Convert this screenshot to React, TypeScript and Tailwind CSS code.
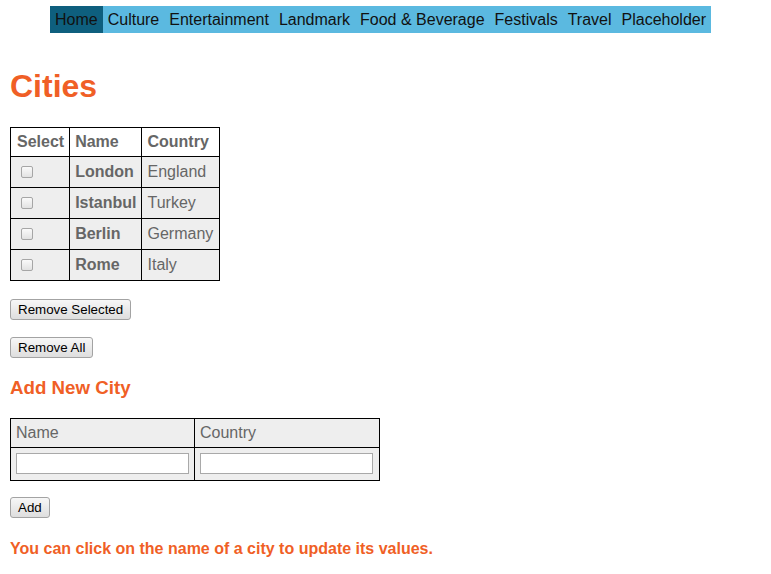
import React from "react";

const navItems = ["Home", "Culture", "Entertainment", "Landmark", "Food & Beverage", "Festivals", "Travel", "Placeholder"];
const cities = [
  { name: "London", country: "England" },
  { name: "Istanbul", country: "Turkey" },
  { name: "Berlin", country: "Germany" },
  { name: "Rome", country: "Italy" },
];

function Btn({ children }: { children: React.ReactNode }) {
  return (
    <button className="h-[21px] px-[7px] border border-[#a3a3a3] rounded-[3px] bg-gradient-to-b from-[#f7f7f7] to-[#dedede] text-[13.33px] leading-none text-black">
      {children}
    </button>
  );
}

export default function App() {
  return (
    <div className="min-h-[574px] bg-white px-[10px] pt-[6px] text-[16px]" style={{ fontFamily: '"Liberation Sans", Arial, sans-serif' }}>
      <nav className="ml-[40px] flex w-fit bg-[#5bb9e0]">
        {navItems.map((n, i) => (
          <span key={n} className={`flex h-[27px] items-center px-[5px] text-[16px] text-[#111] ${i === 0 ? "bg-[#0e5f7e]" : ""}`}>
            {n}
          </span>
        ))}
      </nav>

      <h1 className="mt-[35px] text-[32px] font-bold leading-[37px] text-[#f05f26]">Cities</h1>

      <table className="mt-[22px] border-collapse text-[#666]">
        <thead>
          <tr className="bg-white">
            <th className="border border-black pl-[6px] pr-[5px] py-[5px] text-left font-bold leading-[18px]">Select</th>
            <th className="border border-black px-[5px] py-[5px] text-left font-bold leading-[18px]">Name</th>
            <th className="border border-black px-[5px] py-[5px] text-left font-bold leading-[18px]">Country</th>
          </tr>
        </thead>
        <tbody>
          {cities.map((c) => (
            <tr key={c.name} className="bg-[#eeeeee]">
              <td className="border border-black px-[5px] py-[5px]">
                <div className="flex h-[20px] items-center">
                  <span className="ml-[5px] block h-[12px] w-[12px] rounded-[2px] border border-[#a6a6a6] bg-gradient-to-b from-[#fafafa] to-[#e2e2e2]" />
                </div>
              </td>
              <td className="border border-black px-[5px] py-[5px] font-bold leading-[20px]">{c.name}</td>
              <td className="border border-black px-[5px] py-[5px] pr-[6px] leading-[20px]">{c.country}</td>
            </tr>
          ))}
        </tbody>
      </table>

      <div className="mt-[18px] flex">
        <Btn>Remove Selected</Btn>
      </div>
      <div className="mt-[17px] flex">
        <Btn>Remove All</Btn>
      </div>

      <h3 className="mt-[19px] text-[18.72px] font-bold leading-[22px] text-[#f05f26]">Add New City</h3>

      <table className="mt-[19px] border-collapse text-[#666]">
        <thead>
          <tr className="bg-[#eeeeee]">
            <th className="w-[184px] border border-black px-[5px] py-[5px] text-left font-normal leading-[18px]">Name</th>
            <th className="w-[185px] border border-black px-[5px] py-[5px] text-left font-normal leading-[18px]">Country</th>
          </tr>
        </thead>
        <tbody>
          <tr className="bg-[#eeeeee]">
            <td className="border border-black px-[5px] pt-[5px] align-top">
              <div className="h-[27px]">
                <input className="block h-[21px] w-[173px] border border-[#a9a9a9] bg-white" />
              </div>
            </td>
            <td className="border border-black px-[5px] pt-[5px] align-top">
              <div className="h-[27px]">
                <input className="block h-[21px] w-[173px] border border-[#a9a9a9] bg-white" />
              </div>
            </td>
          </tr>
        </tbody>
      </table>

      <div className="mt-[16px] flex">
        <Btn>Add</Btn>
      </div>

      <p className="mt-[22px] text-[16px] font-bold leading-[18px] text-[#f05f26]">
        You can click on the name of a city to update its values.
      </p>
    </div>
  );
}
